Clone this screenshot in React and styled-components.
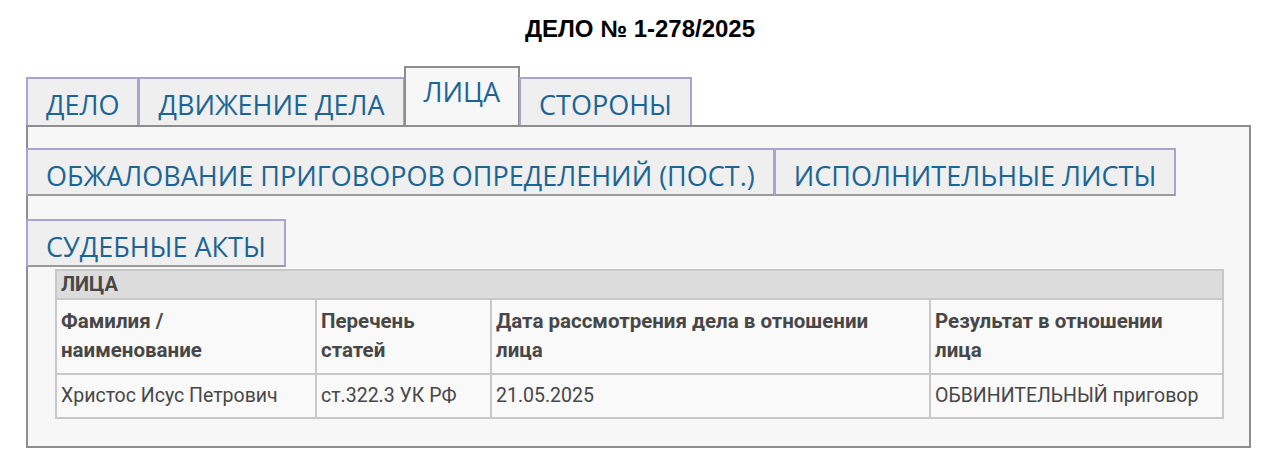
import React from "react";
import styled, { createGlobalStyle } from "styled-components";

const Global = createGlobalStyle`
  html, body { margin: 0; padding: 0; background: #ffffff; }
  body { font-family: "Liberation Sans", Arial, sans-serif; }
`;

const Page = styled.div`
  width: 1280px;
  padding-top: 15px;
`;

const Title = styled.h1`
  margin: 0;
  text-align: center;
  font-family: "Liberation Sans", Arial, sans-serif;
  font-weight: bold;
  font-size: 24px;
  line-height: 28px;
  color: #000;
`;

const TabStrip = styled.div`
  display: flex;
  align-items: flex-end;
  padding-left: ${(p) => p.$indent || 0}px;
  margin-top: ${(p) => p.$top || 0}px;
  margin-left: ${(p) => p.$shift || 0}px;
  position: relative;
  z-index: 1;
`;

const Tab = styled.div`
  box-sizing: border-box;
  height: ${(p) => (p.$active ? 59 : 48)}px;
  padding: ${(p) => (p.$active ? 8 : 10)}px 18px 0;
  margin-left: -1px;
  background: ${(p) => (p.$active ? "#f7f7f7" : "#efefef")};
  border: 2px solid ${(p) => (p.$active ? "#8e8e8e" : "#a8a4cf")};
  border-bottom: ${(p) => (p.$closed ? "2px solid #9a9a9a" : "none")};
  font-family: "Open Sans", "Noto Sans", sans-serif;
  font-size: 27px;
  line-height: 32px;
  color: #1b6596;
  white-space: nowrap;
  &:first-child { margin-left: 0; }
`;

const Panel = styled.div`
  box-sizing: border-box;
  margin: 0 29px 0 26px;
  border: 2px solid #8e8e8e;
  background: #f7f7f7;
  padding-bottom: 27px;
`;

const Table = styled.table`
  margin: 2px 27px 0 27px;
  width: calc(100% - 54px);
  table-layout: fixed;
  border-collapse: collapse;
  font-family: Roboto, "Liberation Sans", sans-serif;
  font-size: 19.5px;
  line-height: 29px;
  color: #474747;
  background: #f9f9f9;
`;

const Caption = styled.th`
  text-align: left;
  background: #dcdcdc;
  border: 2px solid #c8c8c8;
  padding: 0 4px;
  font-weight: bold;
  font-size: 20px;
  line-height: 27px;
`;

const Head = styled.th`
  text-align: left;
  vertical-align: top;
  font-weight: bold;
  font-size: 20.5px;
  border: 2px solid #c8c8c8;
  padding: 7px 15px 8px 4px;
`;

const Cell = styled.td`
  text-align: left;
  border: 2px solid #c8c8c8;
  padding: 6px 4px 7px;
  white-space: nowrap;
`;

const columns = [
  { w: 260, label: "Фамилия / наименование" },
  { w: 175, label: "Перечень статей" },
  { w: 439, label: "Дата рассмотрения дела в отношении лица" },
  { w: 293, label: "Результат в отношении лица" },
];

const row = [
  "Христос Исус Петрович",
  "ст.322.3 УК РФ",
  "21.05.2025",
  "ОБВИНИТЕЛЬНЫЙ приговор",
];

export default function App() {
  return (
    <Page>
      <Global />
      <Title>ДЕЛО № 1-278/2025</Title>
      <TabStrip $indent={26} $top={23}>
        <Tab>ДЕЛО</Tab>
        <Tab>ДВИЖЕНИЕ ДЕЛА</Tab>
        <Tab $active>ЛИЦА</Tab>
        <Tab>СТОРОНЫ</Tab>
      </TabStrip>
      <Panel>
        <TabStrip $top={21} $shift={-2}>
          <Tab $closed>ОБЖАЛОВАНИЕ ПРИГОВОРОВ ОПРЕДЕЛЕНИЙ (ПОСТ.)</Tab>
          <Tab $closed>ИСПОЛНИТЕЛЬНЫЕ ЛИСТЫ</Tab>
        </TabStrip>
        <TabStrip $top={23} $shift={-2}>
          <Tab $closed>СУДЕБНЫЕ АКТЫ</Tab>
        </TabStrip>
        <Table>
          <colgroup>
            {columns.map((c) => (
              <col key={c.label} style={{ width: c.w }} />
            ))}
          </colgroup>
          <thead>
            <tr>
              <Caption colSpan={4}>ЛИЦА</Caption>
            </tr>
            <tr>
              {columns.map((c) => (
                <Head key={c.label}>{c.label}</Head>
              ))}
            </tr>
          </thead>
          <tbody>
            <tr>
              {row.map((v) => (
                <Cell key={v}>{v}</Cell>
              ))}
            </tr>
          </tbody>
        </Table>
      </Panel>
    </Page>
  );
}
